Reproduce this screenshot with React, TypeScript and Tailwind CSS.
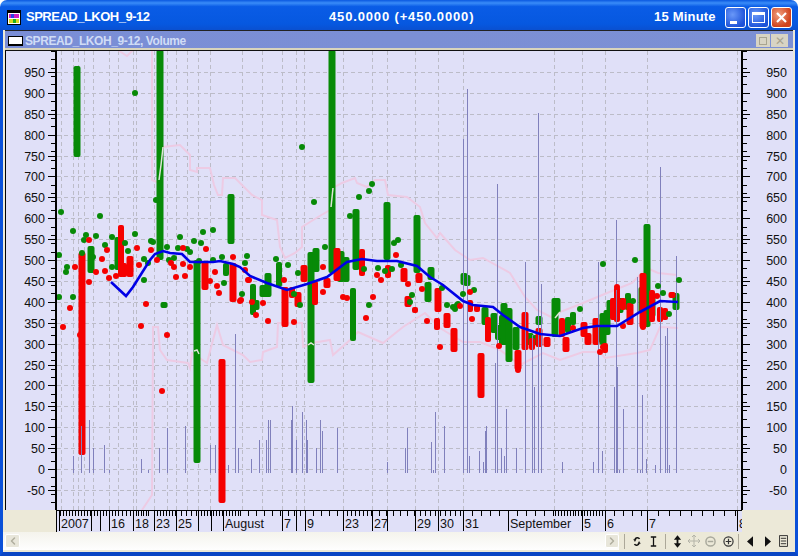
import { ChevronLeft, ChevronRight } from "lucide-react";

// [x, top, bottom, width]
const GREEN: number[][] = [
  [77, 66, 157, 6], [91, 246, 273, 6], [118, 237, 270, 6], [160, 50, 260, 6], [164, 302, 308, 6], [197, 260, 463, 6],
  [226, 263, 276, 5], [231, 194, 244, 6], [253, 284, 315, 5], [268, 273, 297, 6], [279, 262, 287, 5], [311, 252, 383, 6],
  [316, 248, 272, 6], [332, 50, 273, 6], [341, 251, 282, 6], [346, 257, 282, 6], [353, 288, 341, 5], [356, 209, 270, 6],
  [387, 202, 260, 6], [417, 215, 273, 6], [428, 282, 302, 6], [431, 267, 280, 6], [255, 300, 310, 8], [264, 285, 297, 8],
  [464, 273, 285, 6], [467, 275, 286, 6], [485, 307, 325, 6], [494, 313, 333, 6], [504, 303, 345, 6], [509, 308, 362, 6],
  [502, 315, 345, 5], [498, 325, 340, 5], [516, 327, 350, 6], [530, 333, 345, 6], [536, 335, 345, 6], [539, 316, 325, 6], [555, 298, 337, 6], [557, 298, 313, 6],
  [568, 317, 333, 5], [573, 312, 325, 5], [603, 313, 345, 6], [598, 327, 342, 5], [610, 300, 318, 6], [620, 298, 313, 6], [628, 293, 310, 5],
  [642, 287, 313, 6], [647, 224, 327, 6], [652, 292, 317, 6], [676, 293, 310, 6], [607, 310, 335, 6], [615, 305, 320, 5],
];
const RED: number[][] = [
  [82, 252, 455, 6], [121, 225, 277, 5], [130, 256, 277, 6], [124, 263, 277, 5], [205, 261, 290, 6], [222, 359, 503, 6],
  [233, 263, 302, 6], [285, 287, 327, 6], [292, 287, 298, 5], [298, 292, 307, 6], [304, 265, 282, 6], [315, 281, 305, 5],
  [327, 278, 288, 6], [337, 248, 281, 6], [362, 249, 276, 5], [388, 265, 278, 5], [404, 268, 282, 6], [419, 273, 283, 6],
  [408, 296, 307, 6], [415, 307, 313, 5], [438, 288, 312, 6], [447, 313, 328, 6], [454, 328, 352, 6], [437, 318, 330, 5],
  [481, 353, 398, 6], [470, 300, 312, 5], [477, 305, 312, 5], [488, 317, 342, 5], [518, 350, 370, 6], [525, 312, 350, 6],
  [532, 338, 350, 5], [539, 328, 347, 6], [547, 337, 347, 6], [562, 318, 337, 5], [566, 337, 352, 6], [584, 322, 337, 6],
  [588, 333, 345, 6], [596, 318, 345, 6], [605, 343, 353, 5], [613, 298, 320, 5], [617, 287, 322, 5], [623, 298, 310, 5],
  [630, 303, 325, 6], [643, 273, 328, 6], [652, 290, 322, 5], [660, 307, 322, 5], [665, 308, 320, 5], [672, 292, 298, 6],
];
const GREEN_DOTS: number[][] = [
  [61, 212], [100, 216], [73, 231], [86, 235], [84, 240], [96, 236], [59, 255], [105, 245], [112, 237], [135, 234], [125, 243],
  [128, 251], [112, 267], [67, 267], [66, 272], [93, 257], [82, 253], [59, 297], [73, 297], [144, 280], [144, 259], [148, 263],
  [151, 241], [153, 242], [156, 200], [167, 247], [169, 260], [174, 258], [180, 237], [178, 248], [187, 249], [190, 252],
  [194, 241], [201, 243], [203, 232], [213, 230], [199, 261], [213, 260], [222, 257], [245, 263], [247, 256], [224, 283],
  [242, 294], [226, 270], [135, 93], [302, 147], [314, 202], [359, 197], [369, 191], [372, 184], [325, 247], [350, 216],
  [394, 243], [398, 240], [276, 259], [288, 265], [298, 273], [300, 305], [364, 269], [378, 268], [385, 271], [392, 269],
  [401, 265], [369, 305], [412, 295], [410, 302], [442, 288], [453, 307], [458, 304], [447, 305], [294, 294], [603, 264],
  [635, 260], [679, 280], [658, 286], [663, 293], [669, 314], [463, 294], [474, 290], [457, 305], [455, 309], [580, 309],
  [633, 301],
];
const RED_DOTS: number[][] = [
  [89, 240], [107, 250], [102, 259], [75, 267], [96, 272], [105, 271], [109, 278], [116, 276], [89, 282], [70, 308], [63, 327],
  [146, 304], [141, 326], [167, 335], [137, 248], [139, 265], [151, 250], [157, 260], [171, 263], [174, 267], [176, 277],
  [183, 248], [183, 264], [190, 267], [185, 276], [206, 249], [215, 272], [210, 281], [217, 286], [219, 293], [233, 257],
  [240, 301], [248, 280], [80, 335], [162, 391], [396, 255], [249, 280], [284, 280], [245, 270], [268, 321], [294, 322],
  [323, 292], [343, 297], [347, 298], [373, 297], [366, 318], [427, 321], [440, 347], [422, 289], [408, 284], [377, 275],
  [381, 280], [323, 267], [252, 302], [263, 303], [256, 315], [241, 300], [472, 319], [470, 292], [623, 326], [617, 287],
  [643, 327], [657, 296], [573, 328], [603, 347], [600, 352], [518, 370], [499, 346], [460, 306],
];
// [x, top]; every bar stands on y=473
const VOLUME: number[][] = [
  [73, 456], [81, 426], [89, 420], [93, 448], [104, 445], [109, 470], [141, 459], [148, 470], [159, 448], [167, 428], [185, 426],
  [210, 445], [215, 445], [228, 465], [235, 334], [238, 448], [251, 459], [259, 440], [266, 440], [268, 420], [270, 420],
  [291, 420], [292, 406], [296, 440], [302, 412], [306, 420], [307, 440], [316, 448], [320, 420], [322, 431], [337, 428],
  [387, 462], [405, 448], [407, 428], [431, 442], [433, 470], [435, 412], [444, 426], [463, 139], [467, 89], [469, 456],
  [479, 451], [483, 462], [485, 431], [486, 426], [495, 363], [497, 184], [501, 448], [504, 456], [506, 409], [516, 448],
  [525, 262], [532, 335], [534, 387], [538, 113], [541, 284], [562, 462], [593, 462], [598, 262], [602, 451], [614, 387],
  [616, 220], [617, 367], [619, 470], [623, 409], [637, 277], [640, 470], [642, 395], [646, 459], [655, 465], [660, 167],
  [665, 336], [667, 328], [669, 465], [676, 256],
];
const BLUE_LINE =
  "111,282 126,296 133,287 150,260 155,254 163,251 170,253 182,254 190,262 213,262 220,261 233,264 240,267 250,276 267,283 287,290 307,284 327,277 347,262 362,259 377,261 397,261 417,266 430,277 443,285 463,301 473,305 493,307 503,315 520,327 540,334 560,336 583,328 597,326 617,326 640,312 660,301 678,302";
const PINK_TOP = "118,50 127,56 133,50";
const PINK_UPPER =
  "152,50 152,180 157,182 160,178 163,147 180,145 190,155 190,170 197,172 197,168 210,168 214,185 218,195 222,195 223,178 235,178 252,195 262,200 262,215 277,220 280,247 285,258 295,253 302,247 302,227 318,217 330,210 333,188 342,183 355,178 357,183 367,187 375,180 385,180 388,195 407,197 420,207 425,223 437,238 440,233 455,250 470,260 483,258 510,273 525,297 537,310 553,318 560,312 583,303 607,293 632,283 647,268 658,273 677,275";
const PINK_LOWER =
  "142,510 152,495 153,340 153,327 158,327 160,350 167,360 188,363 190,368 192,353 207,363 213,340 217,325 223,345 243,355 250,362 262,360 263,352 277,347 278,323 295,323 302,323 303,347 312,343 330,340 333,355 350,340 358,332 383,343 403,327 425,313 440,328 463,342 480,342 500,350 520,365 543,353 560,360 583,352 600,352 605,358 637,353 650,350 660,327 678,328";
// where the band crosses a green bar it shows up pale
const PALE_BITS = ["163,147 161,165 159,180", "333,188 331,207", "194,351 197,350 199,354", "308,345 311,343 314,345", "555,318 560,312"];
const GRID_X = [61, 73, 78, 84, 93, 109, 118, 133, 136, 154, 167, 176, 187, 198, 210, 242, 262, 282, 296, 304, 343, 372, 387, 415, 438, 463, 554, 582, 605, 647, 737];
const DATE_MARKS: [number, string][] = [
  [59, "2007"], [91, ""], [100, ""], [109, "16"], [133, "18"], [154, "23"], [176, "25"], [198, ""], [211, ""], [223, "August"],
  [282, "7"], [296, ""], [305, "9"], [343, "23"], [372, "27"], [387, ""], [415, "29"], [438, "30"], [463, "31"],
  [508, "September"], [582, "5"], [605, "6"], [647, "7"], [737, "8"],
];
const TICK_RUNS = [[60, 91, 3], [91, 118, 3], [118, 133, 4], [133, 150, 2.5], [154, 176, 3], [176, 198, 5], [198, 223, 3], [223, 240, 3], [240, 282, 8], [282, 305, 6], [305, 343, 8], [343, 372, 4], [372, 415, 7], [415, 463, 5], [463, 508, 9], [508, 555, 9], [555, 575, 3], [575, 605, 3], [605, 647, 9], [647, 737, 11]];
const TICKS = TICK_RUNS.flatMap(([a, b, s]) => Array.from({ length: Math.ceil((b - a) / s) }, (_, i) => a + i * s));

const LEVELS = Array.from({ length: 21 }, (_, i) => 950 - i * 50);
const yOf = (v: number) => 469 - v * 0.418;

function Bars({ data, color }: { data: number[][]; color: string }) {
  return (
    <>
      {data.map(([x, top, bottom, w], i) => (
        <rect key={i} x={x - (w + 1) / 2} y={top} width={w + 1} height={bottom - top} rx={2} fill={color} />
      ))}
    </>
  );
}

function Dots({ data, color }: { data: number[][]; color: string }) {
  return (
    <>
      {data.map(([x, y], i) => (
        <circle key={i} cx={x} cy={y} r={3} fill={color} />
      ))}
    </>
  );
}

function Plot() {
  return (
    <svg width={684} height={459} viewBox="57 51 684 459" className="block bg-[#e0e0f8]">
      {LEVELS.map((v) => (
        <line key={v} x1={57} x2={741} y1={Math.round(yOf(v)) + 0.5} y2={Math.round(yOf(v)) + 0.5} stroke="#bcbcc8" strokeDasharray="4 3" />
      ))}
      {GRID_X.map((x) => (
        <line key={x} x1={x + 0.5} x2={x + 0.5} y1={51} y2={510} stroke="#bcbcc8" strokeDasharray="4 3" />
      ))}
      {[PINK_TOP, PINK_UPPER, PINK_LOWER].map((p) => (
        <polyline key={p} points={p} fill="none" stroke="#edcbe4" strokeWidth={2} />
      ))}
      <Bars data={GREEN} color="#078a07" />
      <Bars data={RED} color="#f50000" />
      {VOLUME.map(([x, top]) => (
        <line key={x} x1={x + 0.5} x2={x + 0.5} y1={top} y2={473} stroke="#8080bc" />
      ))}
      <Dots data={GREEN_DOTS} color="#078a07" />
      <Dots data={RED_DOTS} color="#f50000" />
      {PALE_BITS.map((p) => (
        <polyline key={p} points={p} fill="none" stroke="#dfe6d8" strokeWidth={1.5} />
      ))}
      <polyline points={BLUE_LINE} fill="none" stroke="#0000e6" strokeWidth={2.6} />
    </svg>
  );
}

function YAxis({ side }: { side: "left" | "right" }) {
  const minor = Array.from({ length: 56 }, (_, i) => 51 + ((469 - 51) % 8.36) + i * 8.36).filter((y) => y < 510);
  const left = side === "left";
  return (
    <svg width={52} height={459} viewBox="0 51 52 459" className="block bg-[#e0e0f8]">
      {left ? <rect x={0} y={51} width={1} height={459} fill="#000" /> : null}
      <rect x={left ? 50 : 0} y={51} width={2} height={459} fill="#000" />
      {minor.map((y) => (
        <line key={y} x1={left ? 46 : 2} x2={left ? 50 : 6} y1={Math.round(y) + 0.5} y2={Math.round(y) + 0.5} stroke="#000" />
      ))}
      {LEVELS.map((v) => (
        <g key={v}>
          <line x1={left ? 43 : 2} x2={left ? 50 : 9} y1={Math.round(yOf(v)) + 0.5} y2={Math.round(yOf(v)) + 0.5} stroke="#000" />
          <text x={left ? 40 : 46} y={yOf(v) + 5} textAnchor="end" fontSize={12.5} fill="#111" className="font-['Liberation_Sans',sans-serif]">
            {v}
          </text>
        </g>
      ))}
    </svg>
  );
}

function TimeAxis() {
  return (
    <svg width={686} height={22} viewBox="56 510 686 22" className="block bg-[#e0e0f8]">
      <rect x={56} y={510} width={686} height={1} fill="#000" />
      <rect x={56} y={510} width={1} height={22} fill="#000" />
      {TICKS.map((x) => (
        <line key={x} x1={Math.round(x) + 0.5} x2={Math.round(x) + 0.5} y1={510} y2={516} stroke="#000" />
      ))}
      {DATE_MARKS.map(([x, label]) => (
        <g key={x}>
          <line x1={x + 0.5} x2={x + 0.5} y1={510} y2={531} stroke="#000" />
          <text x={x + 2} y={528} fontSize={12.5} fill="#111" className="font-['Liberation_Sans',sans-serif]">
            {label}
          </text>
        </g>
      ))}
    </svg>
  );
}

function AppIcon() {
  return (
    <svg width={14} height={15} viewBox="0 0 14 15" className="shrink-0">
      <rect x={0.5} y={0.5} width={13} height={14} fill="#fff" stroke="#000" />
      <rect x={1} y={1} width={12} height={2} fill="#000" />
      <rect x={2} y={4} width={10} height={4} fill="#d020c0" />
      <rect x={4} y={4} width={3} height={4} fill="#3040e0" />
      <rect x={2} y={9} width={10} height={4} fill="#d8d820" />
      <rect x={6} y={9} width={3} height={4} fill="#20b020" />
    </svg>
  );
}

function ToolGlyphs() {
  const sep = <div className="h-[15px] w-px bg-[#aca899]" />;
  return (
    <div className="flex flex-1 items-center pl-[5px]">
      {sep}
      <svg width={10} height={13} viewBox="0 0 12 14" className="ml-[7px]" fill="none" stroke="#111" strokeWidth={1.8}>
        <path d="M9 4C8 2 4 2 3.500 5M3 10C4 12 8 12 8.500 9" />
        <path d="M2 4.500h3L3.500 7zM10 9.500H7L8.500 7z" fill="#111" strokeWidth={0.5} />
      </svg>
      <svg width={9} height={11} viewBox="0 0 10 12" className="ml-[7px]" stroke="#111" strokeWidth={1.4}>
        <path d="M2 1h6M5 1v10M2 11h6" />
      </svg>
      <div className="ml-[7px]">{sep}</div>
      <svg width={9} height={13} viewBox="0 0 10 14" className="ml-[7px]" fill="#111">
        <path d="M5 0l4 5H6v4h3l-4 5-4-5h3V5H1z" />
      </svg>
      <svg width={12} height={12} viewBox="0 0 12 12" className="ml-[6px]" stroke="#b4b4a8" strokeWidth={1}>
        <path d="M6 0v12M0 6h12M4 2l2-2 2 2M4 10l2 2 2-2M2 4L0 6l2 2M10 4l2 2-2 2" fill="none" />
      </svg>
      <svg width={11} height={11} viewBox="0 0 12 12" className="ml-[5px]" fill="none" stroke="#a9a99c" strokeWidth={1.6}>
        <circle cx={6} cy={6} r={5} />
        <path d="M3 6h6" />
      </svg>
      <svg width={11} height={11} viewBox="0 0 12 12" className="ml-[7px]" fill="none" stroke="#333" strokeWidth={1.3}>
        <circle cx={6} cy={6} r={5} />
        <path d="M3 6h6M6 3v6" />
      </svg>
      <div className="ml-[4px]">{sep}</div>
      <svg width={6} height={11} viewBox="0 0 7 12" className="ml-[8px]" fill="#111">
        <path d="M7 0v12L0 6z" />
      </svg>
      <svg width={6} height={11} viewBox="0 0 7 12" className="ml-[12px]" fill="#111">
        <path d="M0 0v12l7-6z" />
      </svg>
      <svg width={9} height={12} viewBox="0 0 10 13" className="ml-[8px]" fill="none" stroke="#222">
        <path d="M.5.500h9v12h-9zM2 3.500h6M2 6.500h6M2 9.500h6" />
      </svg>
    </div>
  );
}

function CaptionButton({ close, children }: { close?: boolean; children: React.ReactNode }) {
  return (
    <div
      className={`flex h-[21px] w-[21px] items-center justify-center rounded-[3px] border border-white ${
        close ? "bg-[radial-gradient(circle_at_35%_35%,#f0a080,#d0421c_70%)]" : "bg-[radial-gradient(circle_at_35%_35%,#6a98f8,#1c52d8_75%)]"
      }`}
    >
      {children}
    </div>
  );
}

export default function App() {
  return (
    <div className="flex h-[556px] w-[798px] flex-col overflow-hidden bg-white font-['Liberation_Sans',sans-serif]">
      <div className="flex h-[30px] shrink-0 items-center rounded-t-[7px] bg-[linear-gradient(180deg,#0a58e0_0%,#3a8cf8_10%,#0a5ce6_22%,#0658e0_80%,#0a50d0_100%)] pl-[7px] pr-[6px] pt-[4px] text-[13px] font-bold text-white">
        <AppIcon />
        <div className="ml-[5px] w-[303px] tracking-[-0.5px]">SPREAD_LKOH_9-12</div>
        <div className="w-[325px] tracking-[0.85px]">450.0000 (+450.0000)</div>
        <div className="w-[71px] tracking-[0.2px]">15 Minute</div>
        <div className="flex gap-[2px]">
          <CaptionButton>
            <div className="mt-[10px] mr-[5px] h-[3px] w-[7px] bg-white" />
          </CaptionButton>
          <CaptionButton>
            <div className="h-[11px] w-[13px] border border-t-[3px] border-white" />
          </CaptionButton>
          <CaptionButton close>
            <svg width={13} height={13} viewBox="0 0 13 13" stroke="#fff" strokeWidth={2.2}>
              <path d="M2 2l9 9M11 2l-9 9" />
            </svg>
          </CaptionButton>
        </div>
      </div>

      <div className="flex flex-1 flex-col border-x-[3px] border-b-[4px] border-x-[#0a50d8] border-b-[#0a46c4] bg-[#ece9d8]">
        <div className="mx-[2px] flex flex-col border-t border-[#222]">
          <div className="flex h-[19px] items-center border-b-2 border-b-[#d8d4bc] bg-[linear-gradient(90deg,#7a8ed6,#7c90d4)] pl-[3px] pr-[5px] pt-[2px]">
            <div className="h-[10px] w-[15px] border border-b-2 border-black bg-white" />
            <div className="ml-[2px] flex-1 text-[12px] font-bold tracking-[-0.4px] text-[#d0dcf6]">SPREAD_LKOH_9-12, Volume</div>
            <div className="flex h-[13px] w-[14px] items-center justify-center bg-[#d8d4c4]">
              <div className="h-[8px] w-[8px] border border-[#a8a490]" />
            </div>
            <div className="ml-[1px] flex h-[13px] w-[17px] items-center justify-center bg-[#d8d4c4] text-[12px] leading-none text-[#a8a490]">✕</div>
          </div>
          <div className="h-px bg-[#111]" />
          <div className="flex">
            <YAxis side="left" />
            <Plot />
            <YAxis side="right" />
          </div>
        </div>
        <div className="flex pl-[53px]">
          <TimeAxis />
        </div>
        <div className="flex h-[18px] items-center bg-[#ece9d8]">
          <div className="flex h-[18px] w-[616px] items-center justify-between bg-[linear-gradient(180deg,#f4f3ec,#fefefe)] pl-[2px]">
            <div className="flex h-[14px] w-[15px] items-center justify-center rounded-[2px] border border-white bg-[#e8e6da]">
              <ChevronLeft size={12} strokeWidth={3} className="text-[#b0ae9f]" />
            </div>
            <div className="flex h-[14px] w-[14px] items-center justify-center rounded-[2px] border border-white bg-[#e8e6da]">
              <ChevronRight size={12} strokeWidth={3} className="text-[#b0ae9f]" />
            </div>
          </div>
          <ToolGlyphs />
        </div>
      </div>
    </div>
  );
}
